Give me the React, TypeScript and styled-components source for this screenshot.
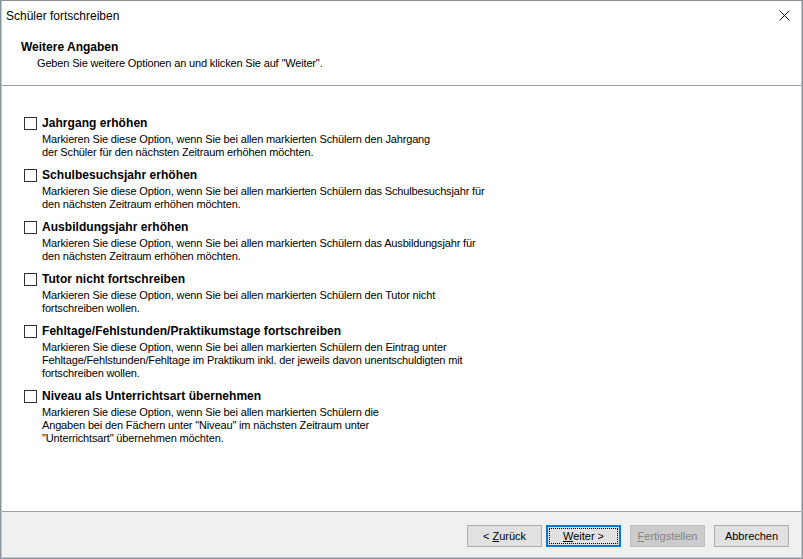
import styled, { createGlobalStyle } from 'styled-components';

const GlobalStyle = createGlobalStyle`
  html, body { margin: 0; padding: 0; background: #ffffff; }
  body { font-family: "Liberation Sans", Arial, sans-serif; }
`

const Window = styled.div`
  width: 803px;
  height: 559px;
  box-sizing: border-box;
  border: 1px solid #8a939c;
  box-shadow: inset 1px 0 #c4c9ce, inset -1px 0 #c4c9ce, inset 0 -1px #c4c9ce;
  display: flex;
  flex-direction: column;
  background: #ffffff;
  color: #000;
`

const TitleBar = styled.div`
  height: 29px;
  display: flex;
  align-items: center;
  justify-content: space-between;
  padding: 0 12px 0 5px;
  font-size: 12px;
  font-family: "Liberation Sans", Arial, sans-serif;
`

const CloseIcon = () => (
  <svg width="11" height="11" viewBox="0 0 11 11">
    <path d="M0.5 0.5 L10.5 10.5 M10.5 0.5 L0.5 10.5" stroke="#111" strokeWidth="1" fill="none" />
  </svg>
)

const Header = styled.div`
  height: 56px;
  box-sizing: border-box;
  padding: 9px 0 0 19px;
  border-bottom: 1px solid #a0a0a0;
  margin: 0 1px;
`

const HeaderTitle = styled.div`
  font-size: 12px;
  font-weight: bold;
  line-height: 16px;
`

const HeaderSub = styled.div`
  font-size: 11px;
  line-height: 14px;
  margin-top: 1px;
  padding-left: 16px;
  letter-spacing: -0.15px;
`

const Content = styled.div`
  flex: 1;
  padding: 29px 0 0 23px;
  display: flex;
  flex-direction: column;
  gap: 8px;
`

const Option = styled.div`
  display: grid;
  grid-template-columns: 13px 1fr;
  column-gap: 5px;
  row-gap: 2px;
`

const Box = styled.div`
  width: 13px;
  height: 13px;
  box-sizing: border-box;
  border: 1px solid #333333;
  background: #fff;
  align-self: center;
`

const OptionTitle = styled.div`
  font-size: 12px;
  font-weight: bold;
  line-height: 16px;
  letter-spacing: 0.05px;
`

const OptionDesc = styled.div`
  grid-column: 2;
  font-size: 11px;
  line-height: 13px;
  letter-spacing: -0.15px;
  color: #000;
`

const Footer = styled.div`
  height: 46px;
  box-sizing: border-box;
  border-top: 1px solid #a0a0a0;
  background: #f0f0f0;
  margin: 0 1px 1px;
  display: flex;
  justify-content: flex-end;
  align-items: flex-start;
  padding: 13px 12px 0 0;
`

const Button = styled.button<{ $focus?: boolean; $gap?: number }>`
  width: 75px;
  height: 22px;
  margin-left: ${p => p.$gap ?? 0}px;
  box-sizing: border-box;
  font-family: "Liberation Sans", Arial, sans-serif;
  font-size: 11px;
  color: #000;
  background: #e1e1e1;
  border: 1px solid ${p => (p.$focus ? '#0078d7' : '#adadad')};
  box-shadow: ${p => (p.$focus ? 'inset 0 0 0 1px #0078d7' : 'none')};
  padding: 0;
  position: relative;
  &:disabled {
    background: #cccccc;
    border-color: #bfbfbf;
    color: #838383;
  }
  u { text-decoration: underline; text-underline-offset: 1px; }
`

const FocusRect = styled.span`
  position: absolute;
  inset: 2px;
  border: 1px dotted #000;
  pointer-events: none;
`

const options = [
  {
    title: 'Jahrgang erhöhen',
    lines: [
      'Markieren Sie diese Option, wenn Sie bei allen markierten Schülern den Jahrgang',
      'der Schüler für den nächsten Zeitraum erhöhen möchten.',
    ],
  },
  {
    title: 'Schulbesuchsjahr erhöhen',
    lines: [
      'Markieren Sie diese Option, wenn Sie bei allen markierten Schülern das Schulbesuchsjahr für',
      'den nächsten Zeitraum erhöhen möchten.',
    ],
  },
  {
    title: 'Ausbildungsjahr erhöhen',
    lines: [
      'Markieren Sie diese Option, wenn Sie bei allen markierten Schülern das Ausbildungsjahr für',
      'den nächsten Zeitraum erhöhen möchten.',
    ],
  },
  {
    title: 'Tutor nicht fortschreiben',
    lines: [
      'Markieren Sie diese Option, wenn Sie bei allen markierten Schülern den Tutor nicht',
      'fortschreiben wollen.',
    ],
  },
  {
    title: 'Fehltage/Fehlstunden/Praktikumstage fortschreiben',
    lines: [
      'Markieren Sie diese Option, wenn Sie bei allen markierten Schülern den Eintrag unter',
      'Fehltage/Fehlstunden/Fehltage im Praktikum inkl. der jeweils davon unentschuldigten mit',
      'fortschreiben wollen.',
    ],
  },
  {
    title: 'Niveau als Unterrichtsart übernehmen',
    lines: [
      'Markieren Sie diese Option, wenn Sie bei allen markierten Schülern die',
      'Angaben bei den Fächern unter "Niveau" im nächsten Zeitraum unter',
      '"Unterrichtsart" übernehmen möchten.',
    ],
  },
]

export default function App() {
  return (
    <>
      <GlobalStyle />
      <Window>
        <TitleBar>
          <span>Schüler fortschreiben</span>
          <CloseIcon />
        </TitleBar>

        <Header>
          <HeaderTitle>Weitere Angaben</HeaderTitle>
          <HeaderSub>Geben Sie weitere Optionen an und klicken Sie auf "Weiter".</HeaderSub>
        </Header>

        <Content>
          {options.map(o => (
            <Option key={o.title}>
              <Box />
              <OptionTitle>{o.title}</OptionTitle>
              <OptionDesc>
                {o.lines.map(l => <div key={l}>{l}</div>)}
              </OptionDesc>
            </Option>
          ))}
        </Content>

        <Footer>
          <Button>&lt; <u>Z</u>urück</Button>
          <Button $focus $gap={4}><FocusRect /><u>W</u>eiter &gt;</Button>
          <Button disabled $gap={9}><u>F</u>ertigstellen</Button>
          <Button $gap={9}>Abbrechen</Button>
        </Footer>
      </Window>
    </>
  )
}
